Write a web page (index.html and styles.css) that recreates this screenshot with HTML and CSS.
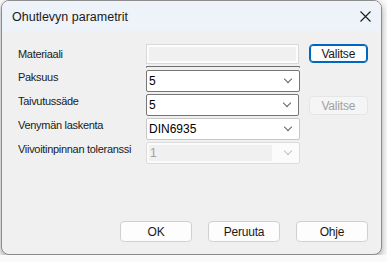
FILE: index.html
```html
<!DOCTYPE html>
<html lang="fi">
<head>
    <meta charset="UTF-8">
    <title>Ohutlevyn parametrit</title>
    <link rel="stylesheet" href="styles.css">
</head>
<body>
    <div class="window">
        <div class="titlebar">
            <span class="title">Ohutlevyn parametrit</span>
            <svg class="close" width="11" height="11" viewBox="0 0 11 11">
                <path d="M0.5 0.5 L10.5 10.5 M10.5 0.5 L0.5 10.5" stroke="#1a1a1a" stroke-width="1.1" fill="none"/>
            </svg>
        </div>
        <div class="content">
            <div class="form">
                <div class="row row-material">
                    <label class="label">Materiaali</label>
                    <div class="edit disabled"><span class="edit-inner"></span></div>
                    <button class="btn btn-default">Valitse</button>
                </div>
                <div class="row row-hidden">
                    <span class="label"></span>
                    <div class="hidden-line"></div>
                </div>
                <div class="row">
                    <label class="label">Paksuus</label>
                    <div class="combo combo-dark"><span class="value">5</span><span class="chev"></span></div>
                </div>
                <div class="row">
                    <label class="label">Taivutussäde</label>
                    <div class="combo combo-dark"><span class="value">5</span><span class="chev"></span></div>
                    <button class="btn btn-disabled">Valitse</button>
                </div>
                <div class="row">
                    <label class="label">Venymän laskenta</label>
                    <div class="combo"><span class="value">DIN6935</span><span class="chev"></span></div>
                </div>
                <div class="row">
                    <label class="label">Viivoitinpinnan toleranssi</label>
                    <div class="combo combo-disabled"><span class="value">1</span><span class="chev"></span></div>
                </div>
            </div>
            <div class="footer">
                <button class="btn btn-foot">OK</button>
                <button class="btn btn-foot">Peruuta</button>
                <button class="btn btn-foot">Ohje</button>
            </div>
        </div>
    </div>
</body>
</html>
```

FILE: styles.css
```css
body {
    margin: 0;
    padding: 0;
    background-color: #fafafa;
    font-family: 'Liberation Sans', Arial, sans-serif;
    color: #000;
}

.window {
    margin-left: 1px;
    width: 379px;
    height: 253px;
    border: 1px solid #8c8c8c;
    border-radius: 8px;
    background-color: #f0f0f0;
    box-shadow: 0 3px 7px rgba(0, 0, 0, 0.35);
    overflow: hidden;
    display: flex;
    flex-direction: column;
}

.titlebar {
    height: 30px;
    background-color: #eef3f9;
    display: flex;
    align-items: center;
    justify-content: space-between;
    padding: 0 10px 0 10px;
    flex-shrink: 0;
}

.title {
    font-family: 'Liberation Sans', Arial, sans-serif;
    font-size: 12.5px;
    color: #1a1a1a;
    padding-top: 1px;
}

.close {
    display: block;
}

.content {
    flex-grow: 1;
    display: flex;
    flex-direction: column;
    padding: 13px 13px 12px 16px;
}

.form {
    display: flex;
    flex-direction: column;
}

.row {
    display: flex;
    align-items: flex-start;
    margin-bottom: 2px;
}

.label {
    width: 128px;
    flex-shrink: 0;
    font-size: 11px;
    line-height: 14px;
    letter-spacing: -0.3px;
    color: #1a1a1a;
}

.row-material .label {
    padding-top: 3px;
}

.edit,
.combo,
.hidden-line {
    width: 154px;
    box-sizing: border-box;
}

.edit {
    height: 20px;
    border: 1px solid #dadada;
    background-color: #fcfcfc;
    padding: 2px;
}

.edit-inner {
    display: block;
    height: 100%;
    background-color: #f0f0f0;
}

.row-hidden {
    margin: 0 0 2px;
    height: 2px;
}

.hidden-line {
    height: 2px;
    border-top: 1px solid #707070;
    border-left: 1px solid #a0a0a0;
    border-right: 1px solid #a0a0a0;
}

.combo {
    height: 22px;
    border: 1px solid #c8c8c8;
    border-radius: 2px;
    background-color: #fff;
    display: flex;
    align-items: center;
    justify-content: space-between;
    padding: 0 8px 0 2px;
}

.combo-dark {
    border-color: #767676;
}

.combo-disabled {
    background-color: #fbfbfb;
    border-color: #dcdcdc;
    padding-left: 2px;
}

.combo-disabled .value {
    color: #a0a0a0;
    background-color: #f0f0f0;
    width: 122px;
    height: 16px;
    line-height: 16px;
    padding-left: 1px;
}

.value {
    font-size: 12px;
    color: #000;
}

.chev {
    width: 5px;
    height: 5px;
    border-right: 1px solid #606060;
    border-bottom: 1px solid #606060;
    transform: rotate(45deg);
    margin-top: -4px;
}

.combo-disabled .chev {
    border-color: #c0c0c0;
}

.btn {
    font-family: 'Liberation Sans', Arial, sans-serif;
    font-size: 12px;
    letter-spacing: -0.2px;
    color: #1a1a1a;
    background-color: #fdfdfd;
    border: 1px solid #d0d0d0;
    border-radius: 4px;
    padding: 0;
    cursor: pointer;
}

.row .btn {
    width: 60px;
    height: 19px;
    margin-left: 10px;
}

.row .btn-disabled {
    margin-top: 2px;
}

.btn-default {
    border-color: #0067c0;
    box-shadow: inset 0 0 0 1px #0067c0;
}

.btn-disabled {
    color: #a0a0a0;
    background-color: #f5f5f5;
    border-color: #e5e5e5;
}

.footer {
    margin-top: auto;
    display: flex;
    justify-content: flex-end;
    gap: 16px;
}

.btn-foot {
    width: 72px;
    height: 21px;
}
```
